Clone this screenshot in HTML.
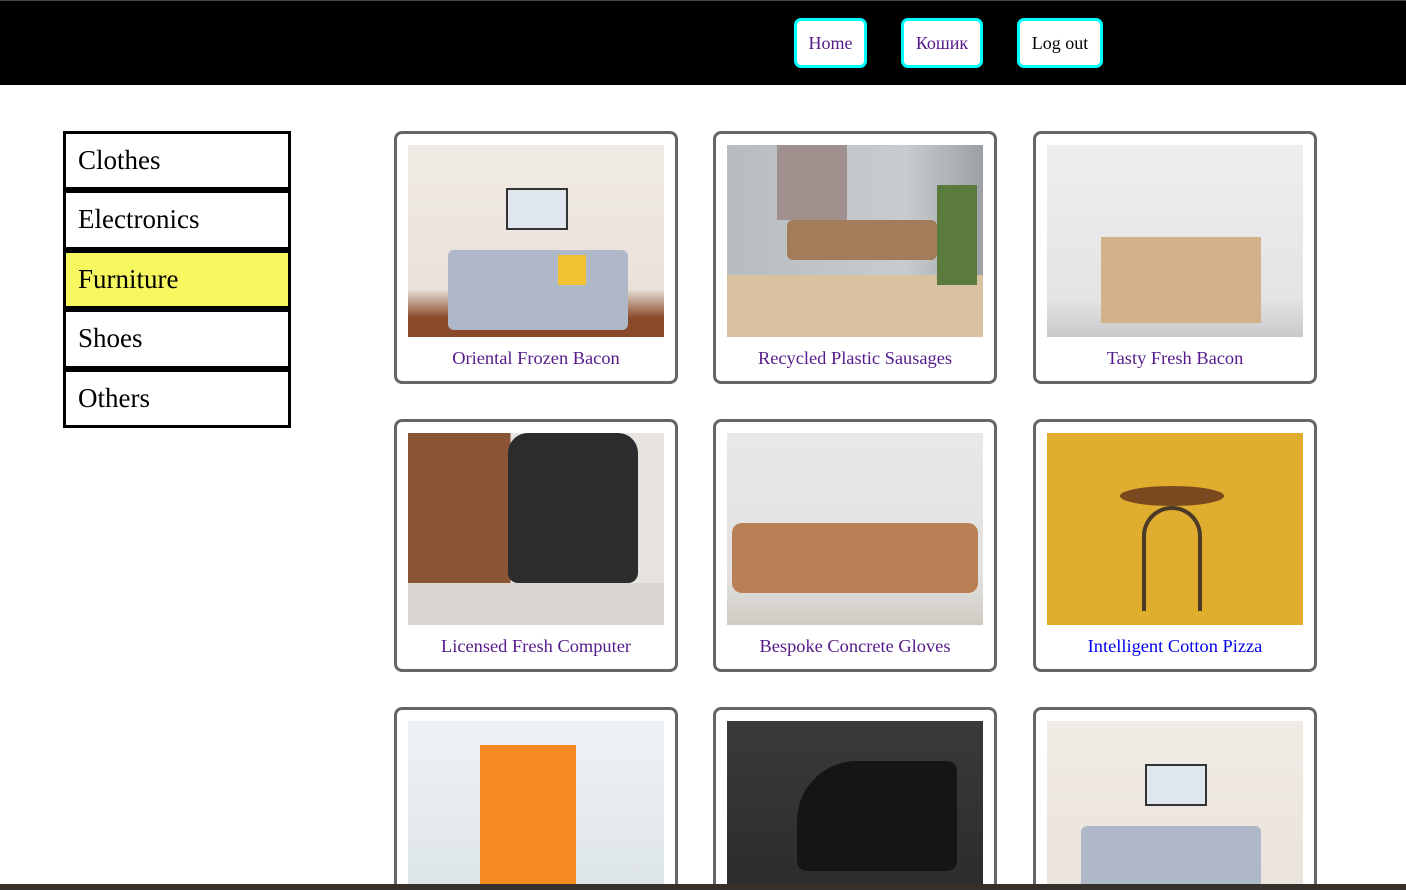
<!DOCTYPE html>
<html style="height:890px;overflow:hidden"><head><meta charset="utf-8"><style>
*{margin:0;padding:0;box-sizing:border-box}
body{width:1406px;height:890px;overflow:hidden;background:#fff;font-family:"Liberation Serif",serif;position:relative}
.hdr{position:absolute;left:0;top:0;width:1406px;height:85px;background:#000;border-top:1px solid #444}
.btn{position:absolute;top:18px;height:50px;background:#fff;border:3px solid #0ff;border-radius:7px;font-size:18px;line-height:44px;text-align:center;color:#551a8b}
.side{position:absolute;left:63px;width:228px;height:59.4px;border:3px solid #000;font-size:27px;line-height:52px;padding-left:12px;color:#000}
.card{position:absolute;width:284px;height:253px;border:3px solid #666;border-radius:8px;background:#fff;overflow:hidden}
.card.last{height:183px;border-bottom:none;border-radius:8px 8px 0 0}
.img{position:absolute;left:11px;top:11px;width:256px;height:192px;overflow:hidden}
.cap{position:absolute;left:0;width:100%;top:214px;text-align:center;font-size:18.4px;color:#551a8b;white-space:nowrap}
.bot{position:absolute;left:0;top:884px;width:1406px;height:6px;background:#35302b;z-index:10}
</style></head><body>
<div class="hdr"></div>
<div class="btn" style="left:794px;width:73px">Home</div>
<div class="btn" style="left:901px;width:82px">Кошик</div>
<div class="btn" style="left:1017px;width:86px;color:#000">Log out</div>

<div class="side" style="top:131px">Clothes</div>
<div class="side" style="top:190.4px">Electronics</div>
<div class="side" style="top:249.8px;background:#f7f760">Furniture</div>
<div class="side" style="top:309.2px">Shoes</div>
<div class="side" style="top:368.6px">Others</div>

<div class="card" style="left:394px;top:131px"><div class="img" style="background:linear-gradient(#f0ebe4,#e9e2da 75%,#8a4a2a 90%)">
<div style="position:absolute;left:98px;top:43px;width:62px;height:42px;border:2px solid #333;background:#dfe6ee"></div>
<div style="position:absolute;left:40px;top:105px;width:180px;height:80px;background:#aeb8c8;border-radius:6px"></div>
<div style="position:absolute;left:150px;top:110px;width:28px;height:30px;background:#f1c232"></div>
</div><div class="cap">Oriental Frozen Bacon</div></div>

<div class="card" style="left:713px;top:131px"><div class="img" style="background:linear-gradient(90deg,#b8bcbf,#c9ccce 70%,#9aa0a4);">
<div style="position:absolute;left:0;top:130px;width:256px;height:62px;background:#d9c2a0"></div>
<div style="position:absolute;left:50px;top:0;width:70px;height:75px;background:#a0908e"></div>
<div style="position:absolute;left:60px;top:75px;width:150px;height:40px;background:#a37c5a;border-radius:6px"></div>
<div style="position:absolute;left:210px;top:40px;width:40px;height:100px;background:#5b7a3e"></div>
</div><div class="cap">Recycled Plastic Sausages</div></div>

<div class="card" style="left:1033px;top:131px"><div class="img" style="background:linear-gradient(#eeeeef,#e4e4e6 80%,#c9c9cb)">
<div style="position:absolute;left:54px;top:92px;width:160px;height:86px;background:#d4b088"></div>
</div><div class="cap">Tasty Fresh Bacon</div></div>

<div class="card" style="left:394px;top:419px"><div class="img" style="background:linear-gradient(90deg,#8a5535 0 40%,#e7e4e0 40%)">
<div style="position:absolute;left:100px;top:0;width:130px;height:150px;background:#2a2c2e;border-radius:20px 20px 10px 10px"></div>
<div style="position:absolute;left:0;top:150px;width:256px;height:42px;background:#d9d6d2"></div>
</div><div class="cap">Licensed Fresh Computer</div></div>

<div class="card" style="left:713px;top:419px"><div class="img" style="background:linear-gradient(#e8e8e6,#e2e1df 75%,#cfcbc3)">
<div style="position:absolute;left:5px;top:90px;width:246px;height:70px;background:#b98056;border-radius:10px"></div>
</div><div class="cap">Bespoke Concrete Gloves</div></div>

<div class="card" style="left:1033px;top:419px"><div class="img" style="background:#e1ad2e">
<div style="position:absolute;left:73px;top:53px;width:104px;height:20px;background:#7a4a1e;border-radius:50%"></div>
<div style="position:absolute;left:95px;top:73px;width:60px;height:105px;border:4px solid #4a3a2a;border-bottom:none;border-radius:30px 30px 0 0"></div>
</div><div class="cap" style="color:#0000ee">Intelligent Cotton Pizza</div></div>

<div class="card last" style="left:394px;top:707px"><div class="img" style="background:linear-gradient(#eef2f4,#dbe3e8)">
<div style="position:absolute;left:72px;top:24px;width:96px;height:150px;background:#f58a23"></div>
</div></div>

<div class="card last" style="left:713px;top:707px"><div class="img" style="background:linear-gradient(#3a3a3a,#2a2a2a)">
<div style="position:absolute;left:70px;top:40px;width:160px;height:110px;background:#151515;border-radius:60px 10px 10px 10px"></div>
</div></div>

<div class="card last" style="left:1033px;top:707px"><div class="img" style="background:linear-gradient(#f0ebe4,#e9e2da)">
<div style="position:absolute;left:98px;top:43px;width:62px;height:42px;border:2px solid #333;background:#dfe6ee"></div>
<div style="position:absolute;left:34px;top:105px;width:180px;height:80px;background:#aeb8c8;border-radius:6px"></div>
</div></div>

<div class="bot"></div>
</body></html>
